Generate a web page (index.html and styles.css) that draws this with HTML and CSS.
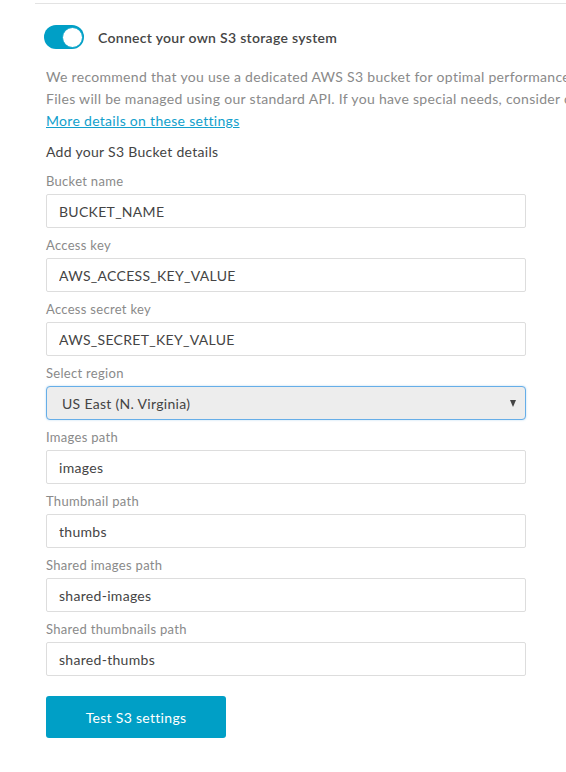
FILE: index.html
```html
<!DOCTYPE html>
<html>
<head>
<meta charset="utf-8">
<link rel="stylesheet" href="styles.css">
</head>
<body>
<div class="page">
  <section class="panel">
    <div class="toggle-row">
      <span class="toggle"><span class="knob"></span></span>
      <span class="toggle-label">Connect your own S3 storage system</span>
    </div>
    <div class="intro">
      <p class="intro-line">We recommend that you use a dedicated AWS S3 bucket for optimal performance.</p>
      <p class="intro-line">Files will be managed using our standard API. If you have special needs, consider contacting us.</p>
      <p class="intro-line"><a href="#" class="link">More details on these settings</a></p>
    </div>
    <h3 class="subhead">Add your S3 Bucket details</h3>
    <div class="fields">
      <label class="field"><span class="label">Bucket name</span><input class="input" value="BUCKET_NAME"></label>
      <label class="field"><span class="label">Access key</span><input class="input" value="AWS_ACCESS_KEY_VALUE"></label>
      <label class="field"><span class="label">Access secret key</span><input class="input" value="AWS_SECRET_KEY_VALUE"></label>
      <label class="field"><span class="label">Select region</span>
        <span class="select"><span class="select-text">US East (N. Virginia)</span><span class="caret"></span></span>
      </label>
      <label class="field"><span class="label">Images path</span><input class="input" value="images"></label>
      <label class="field"><span class="label">Thumbnail path</span><input class="input" value="thumbs"></label>
      <label class="field"><span class="label">Shared images path</span><input class="input" value="shared-images"></label>
      <label class="field"><span class="label">Shared thumbnails path</span><input class="input" value="shared-thumbs"></label>
    </div>
    <button class="btn">Test S3 settings</button>
  </section>
</div>
</body>
</html>
```
FILE: styles.css
```css
html, body {
  margin: 0;
  padding: 0;
  background: #fff;
  overflow: hidden;
}
body {
  font-family: Lato, "Open Sans", sans-serif;
  font-size: 14px;
  letter-spacing: 0.3px;
  color: #444;
}
.page {
  padding: 3px 0 0 35px;
}
.panel {
  border-top: 1px solid #e3e3e3;
  padding: 21px 0 0 11px;
}
.toggle-row {
  display: flex;
  align-items: center;
  gap: 14px;
  margin-left: -2px;
}
.toggle {
  width: 40px;
  height: 24px;
  border-radius: 12px;
  background: #009fc6;
  display: flex;
  align-items: center;
  justify-content: flex-end;
  padding: 0 1px;
  box-sizing: border-box;
}
.knob {
  width: 21px;
  height: 21px;
  border-radius: 50%;
  background: #fff;
  border: 1px solid #0aa4c9;
  box-sizing: border-box;
}
.toggle-label {
  font-weight: 600;
  color: #454545;
  font-size: 14px;
}
.intro {
  margin: 17px 0 0;
  color: #8a8a8a;
  width: 520px;
  overflow: hidden;
}
.intro-line {
  margin: 0;
  line-height: 22px;
  white-space: nowrap;
}
.link {
  color: #129fcc;
  text-decoration: underline;
}
.subhead {
  margin: 10px 0 0;
  font-size: 14px;
  font-weight: 400;
  line-height: 20px;
  color: #444;
}
.fields {
  margin-top: 9px;
  display: flex;
  flex-direction: column;
  gap: 7px;
}
.field {
  display: flex;
  flex-direction: column;
  gap: 3px;
}
.label {
  font-size: 13px;
  line-height: 20px;
  color: #8a8a8a;
}
.input {
  width: 480px;
  height: 34px;
  box-sizing: border-box;
  border: 1px solid #ddd;
  border-radius: 2px;
  padding: 0 12px;
  font-family: inherit;
  font-size: 14px;
  letter-spacing: 0.3px;
  color: #444;
  background: #fff;
  outline: none;
}
.select {
  width: 480px;
  height: 34px;
  box-sizing: border-box;
  border: 1px solid #66aee8;
  border-radius: 4px;
  background: #ededed;
  display: flex;
  align-items: center;
  justify-content: space-between;
  padding: 0 9px 0 15px;
  box-shadow: 0 0 2px rgba(102,174,232,0.5);
}
.select-text {
  color: #444;
}
.caret {
  width: 0;
  height: 0;
  border-left: 3.5px solid transparent;
  border-right: 3.5px solid transparent;
  border-top: 7px solid #444;
}
.btn {
  margin-top: 20px;
  width: 180px;
  height: 42px;
  border: none;
  border-radius: 3px;
  background: #009fc6;
  color: #fff;
  font-family: inherit;
  font-size: 14px;
  letter-spacing: 0.3px;
  display: block;
}
```
